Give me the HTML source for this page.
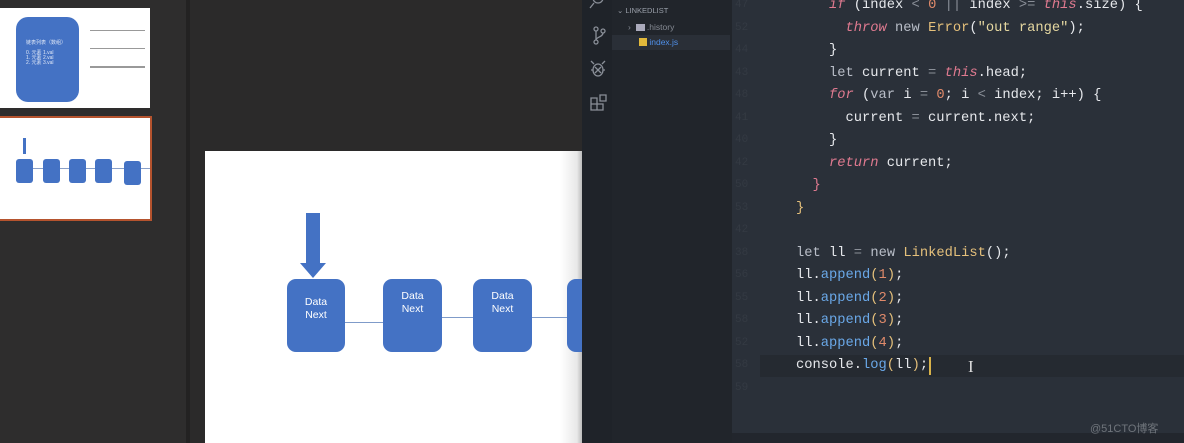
<!DOCTYPE html><html><head><meta charset="utf-8"><style>
*{margin:0;padding:0;box-sizing:border-box}
body{width:1184px;height:443px;overflow:hidden;background:#2b2a2a;position:relative;font-family:"Liberation Sans","Noto Sans CJK SC",sans-serif}
.a{position:absolute}
.code{font-family:"Liberation Mono",monospace;font-size:13.75px;color:#e6e8ec;white-space:pre;line-height:22.5px}
.k{color:#b9bec8}.i{color:#e07a90;font-style:italic}.y{color:#e5c07b}.b{color:#6aa8e8}.n{color:#e08a6a}.s{color:#e5d7a0}.g{color:#8a8f98}
.node{position:absolute;background:#4472c4;border-radius:9px;color:#fff;font-size:10px;text-align:center;line-height:13px}
</style></head><body>
<div class="a" style="left:0;top:0;width:188px;height:443px;background:#2e2d2d"></div>
<div class="a" style="left:186px;top:0;width:4px;height:443px;background:#232222"></div>
<div class="a" style="left:0;top:8px;width:150px;height:100px;background:#fff"></div>
<div class="a" style="left:16px;top:17px;width:63px;height:85px;background:#4472c4;border-radius:12px;color:#dfe7f7;font-size:5px;padding:24px 0 0 10px;line-height:5px">链表列表（数组）<br><br>0. 元素 1.val<br>1. 元素 2.val<br>2. 元素 3.val</div>
<div class="a" style="left:90px;top:30px;width:55px;height:1px;background:#999"></div>
<div class="a" style="left:90px;top:48px;width:55px;height:1px;background:#999"></div>
<div class="a" style="left:90px;top:66px;width:55px;height:2px;background:#999"></div>
<div class="a" style="left:0;top:116px;width:152px;height:105px;background:#fff;border:2px solid #b5532e;border-left:none"></div>
<div class="a" style="left:23px;top:138px;width:3px;height:16px;background:#4472c4"></div>
<div class="a" style="left:20px;top:168px;width:130px;height:1px;background:#8aa0c8"></div>
<div class="node" style="left:16px;top:159px;width:17px;height:24px;border-radius:3px"></div>
<div class="node" style="left:43px;top:159px;width:17px;height:24px;border-radius:3px"></div>
<div class="node" style="left:69px;top:159px;width:17px;height:24px;border-radius:3px"></div>
<div class="node" style="left:95px;top:159px;width:17px;height:24px;border-radius:3px"></div>
<div class="node" style="left:124px;top:161px;width:17px;height:24px;border-radius:3px"></div>
<div class="a" style="left:205px;top:151px;width:377px;height:292px;background:linear-gradient(90deg,#fff 0,#fff 355px,#e8e8e8 372px,#bbb 377px)"></div>
<div class="a" style="left:306px;top:213px;width:14px;height:52px;background:#4472c4"></div>
<div class="a" style="left:300px;top:263px;width:0;height:0;border-left:13px solid transparent;border-right:13px solid transparent;border-top:15px solid #4472c4"></div>
<div class="a" style="left:345px;top:322px;width:40px;height:1px;background:#7f9bc9"></div>
<div class="a" style="left:442px;top:317px;width:32px;height:1px;background:#7f9bc9"></div>
<div class="a" style="left:532px;top:317px;width:36px;height:1px;background:#7f9bc9"></div>
<div class="node" style="left:287px;top:279px;width:58px;height:73px;padding-top:17px;font-size:10.5px">Data<br>Next</div>
<div class="node" style="left:383px;top:279px;width:59px;height:73px;padding-top:11px;font-size:10.5px">Data<br>Next</div>
<div class="node" style="left:473px;top:279px;width:59px;height:73px;padding-top:11px;font-size:10.5px">Data<br>Next</div>
<div class="node" style="left:567px;top:279px;width:20px;height:73px;border-radius:9px 0 0 9px"></div>
<div class="a" style="left:582px;top:0;width:30px;height:443px;background:#1f2329"></div>
<div class="a" style="left:612px;top:0;width:120px;height:443px;background:#21252b"></div>
<div class="a" style="left:732px;top:0;width:452px;height:443px;background:#2a3039"></div>
<div class="a" style="left:732px;top:433px;width:452px;height:10px;background:#22262d"></div>
<div class="a" style="left:760px;top:355px;width:424px;height:22px;background:#252a31"></div>
<svg class="a" style="left:586px;top:0" width="24" height="120" fill="none" stroke="#8a8f98" stroke-width="1.3">
<circle cx="12" cy="-2" r="5"/><path d="M8 3 L4 8"/>
<circle cx="10" cy="29" r="2"/><circle cx="10" cy="42" r="2"/><circle cx="17" cy="31" r="2"/><path d="M10 31v9M17 33c0 4-7 4-7 7"/>
<ellipse cx="12" cy="70" rx="5" ry="6"/><path d="M8 64l-3-3M16 64l3-3M5 70h2M17 70h2M9 67l6 6M15 67l-6 6"/>
<path d="M5 98h6v6h-6zM5 104h6v6h-6zM11 104h6v6h-6zM14 95h6v6h-6z"/>
</svg>
<div class="a" style="left:617px;top:6px;font-size:7.5px;color:#9aa0aa">⌄ LINKEDLIST</div>
<div class="a" style="left:628px;top:22px;font-size:8.5px;color:#868b94">›&nbsp;&nbsp;<span style="display:inline-block;width:9px;height:7px;background:#aab;vertical-align:-1px"></span> .history</div>
<div class="a" style="left:612px;top:35px;width:118px;height:15px;background:#2a2f37"></div>
<div class="a" style="left:639px;top:37px;font-size:8.5px;color:#4f8fe8"><span style="display:inline-block;width:8px;height:8px;background:#e2b93b;vertical-align:-1px"></span> index.js</div>
<div class="a code" style="left:735px;top:-6px;color:#343a43;font-size:11px">47
52
44
43
48
41
40
42
50
53
42
38
56
55
58
52
58
59</div>
<div class="a code" style="left:796px;top:-5px">    <span class="i">if</span> (index <span class="g">&lt;</span> <span class="n">0</span> <span class="g">||</span> index <span class="g">&gt;=</span> <span class="i">this</span>.size) {
      <span class="i">throw</span> <span class="k">new</span> <span class="y">Error</span>(<span class="s">"out range"</span>);
    }
    <span class="k">let</span> current <span class="g">=</span> <span class="i">this</span>.head;
    <span class="i">for</span> (<span class="k">var</span> i <span class="g">=</span> <span class="n">0</span>; i <span class="g">&lt;</span> index; i++) {
      current <span class="g">=</span> current.next;
    }
    <span class="i">return</span> current;
  <span class="i" style="font-style:normal">}</span>
<span class="y">}</span>

<span class="k">let</span> ll <span class="g">=</span> <span class="k">new</span> <span class="y">LinkedList</span>();
ll.<span class="b">append</span><span class="y">(</span><span class="n">1</span><span class="y">)</span>;
ll.<span class="b">append</span><span class="y">(</span><span class="n">2</span><span class="y">)</span>;
ll.<span class="b">append</span><span class="y">(</span><span class="n">3</span><span class="y">)</span>;
ll.<span class="b">append</span><span class="y">(</span><span class="n">4</span><span class="y">)</span>;
console.<span class="b">log</span><span class="y">(</span>ll<span class="y">)</span>;</div>
<div class="a" style="left:929px;top:357px;width:2px;height:18px;background:#d8b24a"></div>
<div class="a" style="left:968px;top:357px;color:#ddd;font-size:17px;font-family:'Liberation Serif',serif">I</div>
<div class="a" style="left:1090px;top:420px;font-size:11px;color:#6f747b">@51CTO博客</div>
</body></html>
